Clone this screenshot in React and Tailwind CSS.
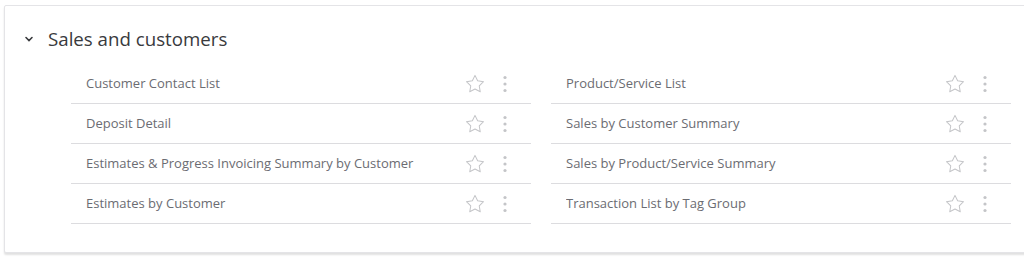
import React from 'react';

const leftReports = [
  'Customer Contact List',
  'Deposit Detail',
  'Estimates & Progress Invoicing Summary by Customer',
  'Estimates by Customer',
];

const rightReports = [
  'Product/Service List',
  'Sales by Customer Summary',
  'Sales by Product/Service Summary',
  'Transaction List by Tag Group',
];

const StarIcon = () => (
  <svg width="22" height="22" viewBox="0 0 24 24" fill="none" stroke="#c4c5c8" strokeWidth="1.1" strokeLinejoin="round">
    <path d="M12 2.6l2.85 5.9 6.45.95-4.67 4.55 1.1 6.42L12 17.4l-5.73 3.02 1.1-6.42L2.7 9.45l6.45-.95z" />
  </svg>
);

const MoreIcon = () => (
  <svg width="4" height="18" viewBox="0 0 4 18" fill="#c4c5c8">
    <circle cx="2" cy="2.5" r="1.6" />
    <circle cx="2" cy="9" r="1.6" />
    <circle cx="2" cy="15.5" r="1.6" />
  </svg>
);

const ReportRow = ({ name }) => (
  <div className="flex items-center h-10 border-b border-[#dcdcdf] pl-[15px] pr-[24px]">
    <span className="flex-1 pt-px text-[13px] text-[#6b6c72] truncate">{name}</span>
    <div className="flex items-center gap-[17px]">
      <StarIcon />
      <MoreIcon />
    </div>
  </div>
);

const App = () => {
  return (
    <div className="w-[1024px] h-[266px] bg-white overflow-hidden pt-[5px] pl-[4px] font-['Open_Sans',sans-serif]">
      <div className="w-[1040px] h-[248px] bg-white border border-[#e4e4e7] rounded-[2px] shadow-[0_2px_2px_rgba(0,0,0,0.12)]">
        {/* Section header */}
        <div className="flex items-center h-[58px] pt-[8px] pl-[18px]">
          <svg width="12" height="12" viewBox="0 0 12 12" fill="none" stroke="#393a3d" strokeWidth="1.6" strokeLinecap="round">
            <path d="M3 4.5l3 3 3-3" />
          </svg>
          <h2 className="ml-[13px] text-[18.7px] text-[#393a3d] leading-none">Sales and customers</h2>
        </div>

        {/* Reports grid */}
        <div className="grid grid-cols-[460px_460px] gap-x-5 pl-[66px]">
          <div>
            {leftReports.map(r => <ReportRow key={r} name={r} />)}
          </div>
          <div>
            {rightReports.map(r => <ReportRow key={r} name={r} />)}
          </div>
        </div>
      </div>
    </div>
  );
};

export default App;
